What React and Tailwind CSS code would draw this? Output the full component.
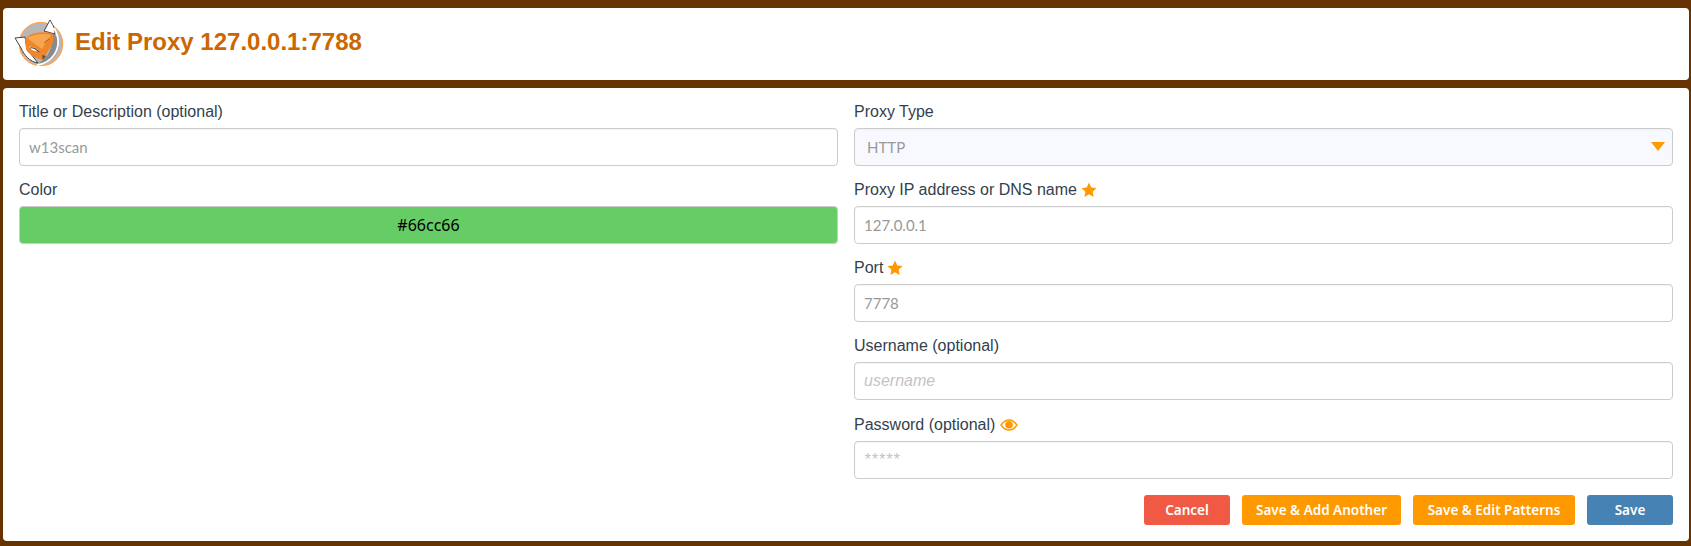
import React from "react";

function Star() {
  return (
    <svg viewBox="0 0 24 24" className="w-[16px] h-[16px] inline-block ml-[4px] fill-[#ff9900]">
      <path d="M12 .8l3.400 7.300 7.900 1-5.800 5.400 1.500 7.900L12 18.500l-6.900 3.900 1.500-7.900L.7 9.100l7.900-1z" />
    </svg>
  );
}

function Eye() {
  return (
    <svg viewBox="0 0 18 12" className="w-[18px] h-[12px] inline-block ml-[5px]">
      <path d="M1 6C3.500 2.500 6 1 9 1s5.500 1.500 8 5c-2.500 3.500-5 5-8 5S3.500 9.500 1 6z" fill="none" stroke="#ff9900" strokeWidth="1.400" />
      <circle cx="9" cy="5.800" r="3.800" fill="#ff9900" />
    </svg>
  );
}

function Logo() {
  return (
    <svg viewBox="0 0 50 50" className="w-[50px] h-[50px] shrink-0 mt-[4px]">
      <circle cx="27" cy="25" r="21.500" fill="#b8b8b8" stroke="#f9a65a" strokeWidth="1.500" />
      <path d="M38 12 C46 20 47 30 41 37 C36 43 29 46 22 45 C30 42 38 34 38 20 Z" fill="#8a8a8a" />
      <path d="M1 19 L11 18 L13 30 L24 44 C16 43 10 36 7 29 Z" fill="#fff" stroke="#444" strokeWidth="1" />
      <path d="M36 1 C38 5 41 8 41 15 L30 12 Z" fill="#fff" stroke="#444" strokeWidth="1" />
      <path d="M11 20 C15 15 24 12 38 14 C41 19 39 24 36 29 C33 34 31 38 29 41 C24 40 14 36 12 30 Z" fill="#f0862a" />
      <path d="M13 19 C20 15 30 14 37 16 C34 20 31 25 28 30 C24 27 18 23 13 19 Z" fill="#f7a64f" />
      <path d="M15 28 C18 27 22 29 25 32 C22 33 18 32 15 28 Z" fill="#fff" />
      <path d="M16 29 C19 28 22 30 25 33" fill="none" stroke="#444" strokeWidth="1.200" />
      <path d="M29 41 L32 37 L28 36 Z" fill="#555" />
      <path d="M40 9 C46 19 45 29 40 36 C36 42 30 45 23 46" fill="none" stroke="#fff" strokeWidth="1.800" />
      <path d="M30 24 L35 20" stroke="#a85a1a" strokeWidth="1" fill="none" />
    </svg>
  );
}

function Field({ label, extra, children }) {
  return (
    <div className="flex flex-col">
      <label className="h-[40px] pt-[14px] text-[16px] leading-[20px] text-[#333f4d] flex items-start">
        <span>{label}</span>
        {extra ? <span className="h-[20px] flex items-center">{extra}</span> : null}
      </label>
      {children}
    </div>
  );
}

const inputClass = "h-[38px] w-full rounded-[4px] border border-[#cccccc] bg-white px-[9px] text-[15px] text-[#999999] font-['Lato',sans-serif] flex items-center shadow-[inset_0_1px_1px_rgba(0,0,0,0.04)]";
const hintClass = "h-[38px] w-full rounded-[4px] border border-[#cccccc] bg-white px-[9px] text-[16px] italic text-[#c4c4c4] font-['Liberation_Sans',sans-serif] flex items-center shadow-[inset_0_1px_1px_rgba(0,0,0,0.04)]";

function Btn({ color, width, children }) {
  return (
    <button className={`h-[30px] rounded-[3px] text-white text-[13.5px] font-semibold font-['Noto_Sans',sans-serif] ${color} ${width}`}>
      {children}
    </button>
  );
}

export default function App() {
  return (
    <div className="h-[546px] bg-[#663300] pt-[8px] pl-[3px] pr-[2px] font-['Liberation_Sans',sans-serif] overflow-hidden">
      <header className="h-[72px] rounded-[4px] bg-white flex items-center pl-[11px] pb-[4px] gap-[11px]">
        <Logo />
        <h1 className="text-[24px] font-bold text-[#cc6600] leading-none">Edit Proxy 127.0.0.1:7788</h1>
      </header>
      <main className="mt-[8px] h-[453px] rounded-[4px] bg-white px-[16px]">
        <div className="grid grid-cols-2 gap-x-[16px]">
          <div className="flex flex-col">
            <Field label="Title or Description (optional)">
              <div className={inputClass}>w13scan</div>
            </Field>
            <Field label="Color">
              <div className="h-[38px] rounded-[4px] border border-[#cccccc] bg-[#66cc66] flex items-center justify-center text-[16px] text-black font-['Noto_Sans',sans-serif]">#66cc66</div>
            </Field>
          </div>
          <div className="flex flex-col">
            <Field label="Proxy Type">
              <div className="relative">
                <div className={`${inputClass} !bg-[#f8f9ff] !pl-[12px]`}>HTTP</div>
                <span className="absolute right-[8px] top-[14px] w-0 h-0 border-l-[7px] border-r-[7px] border-t-[9px] border-l-transparent border-r-transparent border-t-[#ff9900]"></span>
              </div>
            </Field>
            <Field label="Proxy IP address or DNS name" extra={<Star />}>
              <div className={inputClass}>127.0.0.1</div>
            </Field>
            <Field label="Port" extra={<Star />}>
              <div className={inputClass}>7778</div>
            </Field>
            <Field label="Username (optional)">
              <div className={hintClass}>username</div>
            </Field>
            <div className="h-[1px]"></div>
            <Field label="Password (optional)" extra={<Eye />}>
              <div className={`${hintClass} tracking-[1px]`}>*****</div>
            </Field>
            <div className="mt-[16px] flex justify-end gap-[12px]">
              <Btn color="bg-[#f05a44]" width="w-[86px]">Cancel</Btn>
              <Btn color="bg-[#ff9900]" width="w-[159px]">Save &amp; Add Another</Btn>
              <Btn color="bg-[#ff9900]" width="w-[162px]">Save &amp; Edit Patterns</Btn>
              <Btn color="bg-[#4682b4]" width="w-[86px]">Save</Btn>
            </div>
          </div>
        </div>
      </main>
    </div>
  );
}
